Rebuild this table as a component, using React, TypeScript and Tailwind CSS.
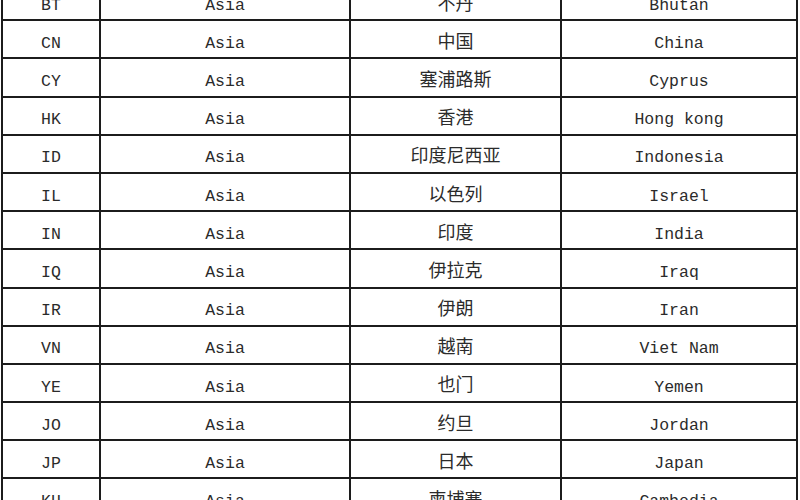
import React from "react"

type Row = [string, string, string, string]

const rows: Row[] = [
  ["BT", "Asia", "不丹", "Bhutan"],
  ["CN", "Asia", "中国", "China"],
  ["CY", "Asia", "塞浦路斯", "Cyprus"],
  ["HK", "Asia", "香港", "Hong kong"],
  ["ID", "Asia", "印度尼西亚", "Indonesia"],
  ["IL", "Asia", "以色列", "Israel"],
  ["IN", "Asia", "印度", "India"],
  ["IQ", "Asia", "伊拉克", "Iraq"],
  ["IR", "Asia", "伊朗", "Iran"],
  ["VN", "Asia", "越南", "Viet Nam"],
  ["YE", "Asia", "也门", "Yemen"],
  ["JO", "Asia", "约旦", "Jordan"],
  ["JP", "Asia", "日本", "Japan"],
  ["KH", "Asia", "柬埔寨", "Cambodia"],
]

const mono = "font-['Liberation_Mono','Noto_Sans_CJK_SC',monospace] text-[16.5px] pt-[10px]"
const cjk = "font-['Noto_Sans_CJK_SC',sans-serif] text-[18px] pt-[2px]"

export default function App() {
  return (
    <div className="w-[800px] h-[500px] overflow-hidden bg-white text-[#2b2b2b]">
      <div className="ml-[1px] -mt-[17px] border-l-2 border-[#1c1c1c] w-[797px]">
        {rows.map(([code, region, zh, en]) => (
          <div
            key={code}
            className="grid grid-cols-[98px_250px_211px_236px] h-[38.2px] border-b-2 border-[#1c1c1c]"
          >
            <div className={`flex items-center justify-center border-r-2 border-[#1c1c1c] ${mono}`}>
              {code}
            </div>
            <div className={`flex items-center justify-center border-r-2 border-[#1c1c1c] ${mono}`}>
              {region}
            </div>
            <div className={`flex items-center justify-center border-r-2 border-[#1c1c1c] ${cjk}`}>
              {zh}
            </div>
            <div className={`flex items-center justify-center border-r-2 border-[#1c1c1c] ${mono}`}>
              {en}
            </div>
          </div>
        ))}
      </div>
    </div>
  )
}
